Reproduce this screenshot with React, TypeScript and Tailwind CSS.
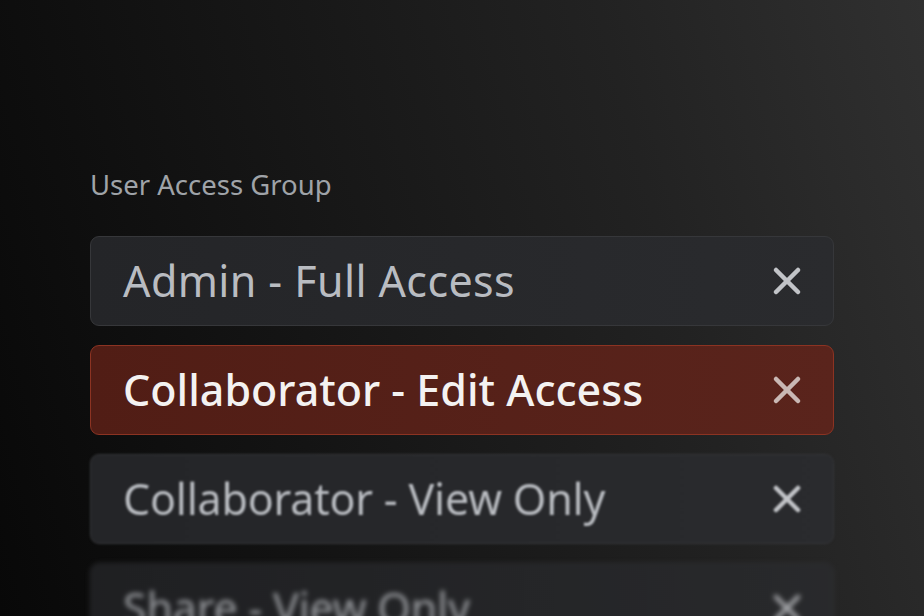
import { X } from "lucide-react";

const groups = [
  { name: "Admin - Full Access", state: "idle" },
  { name: "Collaborator - Edit Access", state: "active" },
  { name: "Collaborator - View Only", state: "soft" },
  { name: "Share - View Only", state: "blur" },
];

function Row({ name, state }: { name: string; state: string }) {
  const active = state === "active";
  let wrap =
    "flex h-[90px] shrink-0 items-center justify-between rounded-[9px] border pl-8 pr-[24px] ";
  if (active) wrap += "border-[#8c3322] bg-[linear-gradient(90deg,#511d15,#5a241c)]";
  else wrap += "border-[#36373a] bg-[linear-gradient(90deg,#242528,#2a2b2e)]";
  if (state === "soft") wrap += " blur-[0.8px]";
  if (state === "blur") wrap += " blur-[2.5px] opacity-80";

  let text = "text-[43px] ";
  if (active) text += "font-medium text-[#f4f2f1]";
  else if (state === "idle") text += "tracking-[0.4px] text-[#b9bcc1]";
  else text += "tracking-[-0.2px] text-[#b9bcc1]";

  return (
    <div className={wrap}>
      <span className={text}>{name}</span>
      <X
        size={44}
        strokeWidth={2.5}
        className={active ? "text-[#c9b8b4]" : "text-[#c2c4c8]"}
      />
    </div>
  );
}

export default function App() {
  return (
    <div
      className="h-[616px] w-[924px] overflow-hidden bg-[linear-gradient(75deg,#080808_0%,#151515_35%,#222222_70%,#303030_100%)]"
      style={{ fontFamily: '"Noto Sans", "Open Sans", sans-serif' }}
    >
      <div className="flex flex-col pl-[90px] pr-[90px] pt-[166px]">
        <div className="text-[27.5px] leading-[38px] text-[#9fa3a8]">User Access Group</div>
        <div className="mt-[32px] flex flex-col gap-[19px]">
          {groups.map((g) => (
            <Row key={g.name} name={g.name} state={g.state} />
          ))}
        </div>
      </div>
    </div>
  );
}
